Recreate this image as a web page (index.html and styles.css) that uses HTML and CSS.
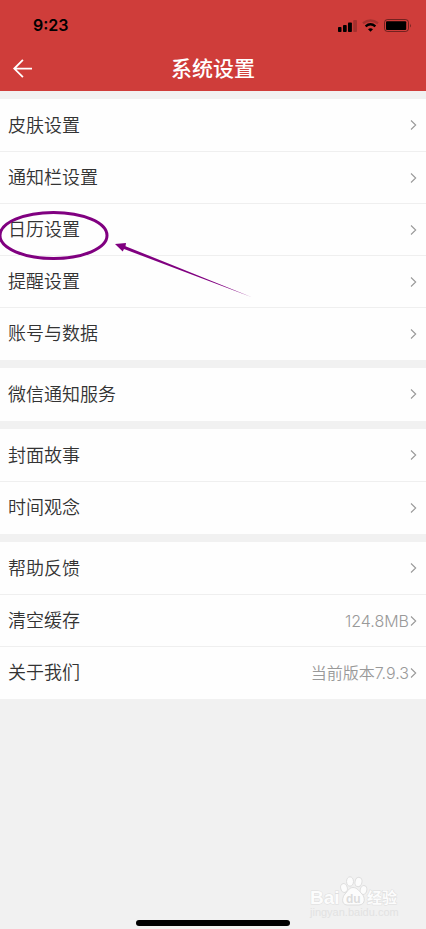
FILE: index.html
```html
<!DOCTYPE html>
<html lang="zh-CN">
<head>
<meta charset="utf-8">
<meta name="viewport" content="width=device-width, initial-scale=1">
<title>系统设置</title>
<link rel="stylesheet" href="styles.css">
</head>
<body>
<svg class="symbols" aria-hidden="true">
  <symbol id="chevron" viewBox="0 0 8 12"><path d="M2 1.500 6.700 6 2 10.500" fill="none" stroke="#999" stroke-width="1.100"/></symbol>
</svg>
<header class="header">
  <div class="status">
    <time class="clock">9:23</time>
    <svg class="indicators" viewBox="0 0 75 16" aria-hidden="true">
      <rect x="0" y="10" width="3.500" height="5" rx="0.800"/>
      <rect x="5" y="8" width="3.700" height="7" rx="0.800"/>
      <rect x="10" y="5.500" width="3.900" height="9.500" rx="0.800"/>
      <rect x="15.200" y="3" width="3.800" height="12" rx="0.800" opacity="0.2"/>
      <path d="M25 6.300Q32.500 0.500 40 6.300" fill="none" stroke="#000" stroke-width="2.400" opacity="0.2"/>
      <path d="M27.600 9.300Q32.500 5.200 37.400 9.300" fill="none" stroke="#000" stroke-width="2.300"/>
      <path d="M32.500 14.700 30 12.300Q32.500 10.200 35 12.300Z"/>
      <rect x="46.500" y="2.500" width="24" height="12" rx="3" fill="none" stroke="#000" opacity="0.45"/>
      <rect x="48" y="4.300" width="20.200" height="8.700" rx="1"/>
      <path d="M72 6.500Q73.500 8.500 72 10.500Z" opacity="0.5"/>
    </svg>
  </div>
  <div class="navbar">
    <button class="back" type="button" aria-label="返回">
      <svg class="back-icon" viewBox="0 0 22 22" aria-hidden="true"><path d="M22 10.500H2.500M12 1 2.500 10.500 12 20" fill="none" stroke="#fff" stroke-width="2"/></svg>
    </button>
    <h1 class="title">系统设置</h1>
  </div>
</header>
<main class="settings">
  <nav class="group">
    <a class="row" href="#skin"><span class="label">皮肤设置</span><svg class="chevron"><use href="#chevron"/></svg></a>
    <a class="row" href="#notification"><span class="label">通知栏设置</span><svg class="chevron"><use href="#chevron"/></svg></a>
    <a class="row row-marked" href="#calendar"><span class="label">日历设置</span><svg class="chevron"><use href="#chevron"/></svg>
      <svg class="annotation" viewBox="0 0 256 96" aria-hidden="true">
        <ellipse cx="53.500" cy="31.500" rx="53.500" ry="23" fill="none" stroke="#800080" stroke-width="3"/>
        <path d="M115 40 126 39 125.500 42.200 252 93.200 124 45 122.700 47.500Z" fill="#800080"/>
      </svg>
    </a>
    <a class="row" href="#reminder"><span class="label">提醒设置</span><svg class="chevron"><use href="#chevron"/></svg></a>
    <a class="row" href="#account"><span class="label">账号与数据</span><svg class="chevron"><use href="#chevron"/></svg></a>
  </nav>
  <nav class="group">
    <a class="row" href="#wechat"><span class="label">微信通知服务</span><svg class="chevron"><use href="#chevron"/></svg></a>
  </nav>
  <nav class="group">
    <a class="row" href="#cover"><span class="label">封面故事</span><svg class="chevron"><use href="#chevron"/></svg></a>
    <a class="row" href="#time"><span class="label">时间观念</span><svg class="chevron"><use href="#chevron"/></svg></a>
  </nav>
  <nav class="group">
    <a class="row" href="#help"><span class="label">帮助反馈</span><svg class="chevron"><use href="#chevron"/></svg></a>
    <a class="row" href="#cache"><span class="label">清空缓存</span><span class="value">124.8MB</span><svg class="chevron"><use href="#chevron"/></svg></a>
    <a class="row" href="#about"><span class="label">关于我们</span><span class="value">当前版本7.9.3</span><svg class="chevron"><use href="#chevron"/></svg></a>
  </nav>
</main>
<footer class="footer">
  <svg class="watermark" viewBox="0 0 94 46" role="img" aria-label="Baidu 经验">
    <g fill="#fcfcfc" stroke="#dedede" stroke-width="1">
      <ellipse cx="37" cy="14" rx="3.300" ry="4.500" transform="rotate(-15 37 14)"/>
      <ellipse cx="43" cy="7.500" rx="3.500" ry="4.700"/>
      <ellipse cx="51.500" cy="8" rx="3.500" ry="4.700" transform="rotate(12 51.500 8)"/>
      <ellipse cx="56.500" cy="16" rx="3.300" ry="4.500" transform="rotate(15 56.500 16)"/>
      <path d="M46 13.500C42 13.500 40.500 17.500 38 20S33.500 30.500 40 31H52C59 30.500 58 23 55 20S50 13.500 46 13.500Z"/>
      <g class="mark-text">
        <text class="mark-latin" x="3" y="30">Bai</text>
        <text class="mark-cjk" x="60" y="29">经验</text>
      </g>
    </g>
    <text class="mark-url" x="3" y="42">jingyan.baidu.com</text>
    <text class="mark-du" x="39" y="29">du</text>
  </svg>
  <div class="home-bar"></div>
</footer>
</body>
</html>
```

FILE: styles.css
```css
* {
  box-sizing: border-box;
}

body {
  margin: 0;
  min-height: 100vh;
  display: flex;
  flex-direction: column;
  background: #f1f1f1;
  color: #333;
  font-family: "Liberation Sans", "Noto Sans CJK SC", sans-serif;
}

.symbols {
  display: none;
}

.header {
  background: #cf3d3a;
}

.status {
  display: flex;
  align-items: center;
  justify-content: space-between;
  height: 46px;
  padding: 4px 13px 0 33px;
  color: #000;
}

.clock {
  font: 600 16px/20px Inter, sans-serif;
}

.indicators {
  width: 75px;
  height: 16px;
}

.navbar {
  display: grid;
  grid-template-columns: 44px 1fr 44px;
  align-items: center;
  height: 45px;
}

.back {
  display: flex;
  padding: 0 12px;
  border: 0;
  background: none;
}

.back-icon {
  width: 22px;
  height: 22px;
}

.title {
  margin: 0;
  color: #fff;
  font-size: 21px;
  font-weight: 500;
  line-height: 30px;
  text-align: center;
}

.settings {
  display: flex;
  flex-direction: column;
  gap: 8px;
  padding-top: 8px;
}

.group {
  padding-bottom: 1px;
  background: #fefefe;
}

.row {
  display: flex;
  align-items: center;
  height: 52px;
  padding: 0 9px 0 8px;
  color: inherit;
  text-decoration: none;
}

.row + .row {
  border-top: 1px solid #efefef;
}

.row-marked {
  position: relative;
}

.label {
  flex: 1;
  padding-top: 1px;
  font-size: 18px;
  font-weight: 350;
  line-height: 26px;
}

.value {
  color: #999;
  font-family: Inter, "Noto Sans CJK SC", sans-serif;
  font-size: 16px;
  font-weight: 350;
  line-height: 24px;
}

.chevron {
  width: 8px;
  height: 12px;
}

.annotation {
  position: absolute;
  top: 0;
  left: 0;
  width: 256px;
  height: 96px;
  z-index: 1;
  pointer-events: none;
}

.footer {
  display: flex;
  flex-direction: column;
  align-items: center;
  margin-top: auto;
  padding-bottom: 3px;
}

.watermark {
  align-self: flex-end;
  width: 94px;
  height: 46px;
  margin-right: 25px;
}

.mark-text {
  paint-order: stroke;
}

.mark-latin {
  font: 700 19px/1 "Liberation Sans", sans-serif;
}

.mark-cjk {
  font: 700 15px/1 "Noto Sans CJK SC", sans-serif;
}

.mark-url {
  font: 400 11px/1 "Liberation Sans", sans-serif;
  fill: #e2e2e2;
}

.mark-du {
  font: 700 12px/1 "Liberation Sans", sans-serif;
  fill: #dcdcdc;
}

.home-bar {
  width: 36%;
  height: 6px;
  border-radius: 3px;
  background: #000;
}
```
